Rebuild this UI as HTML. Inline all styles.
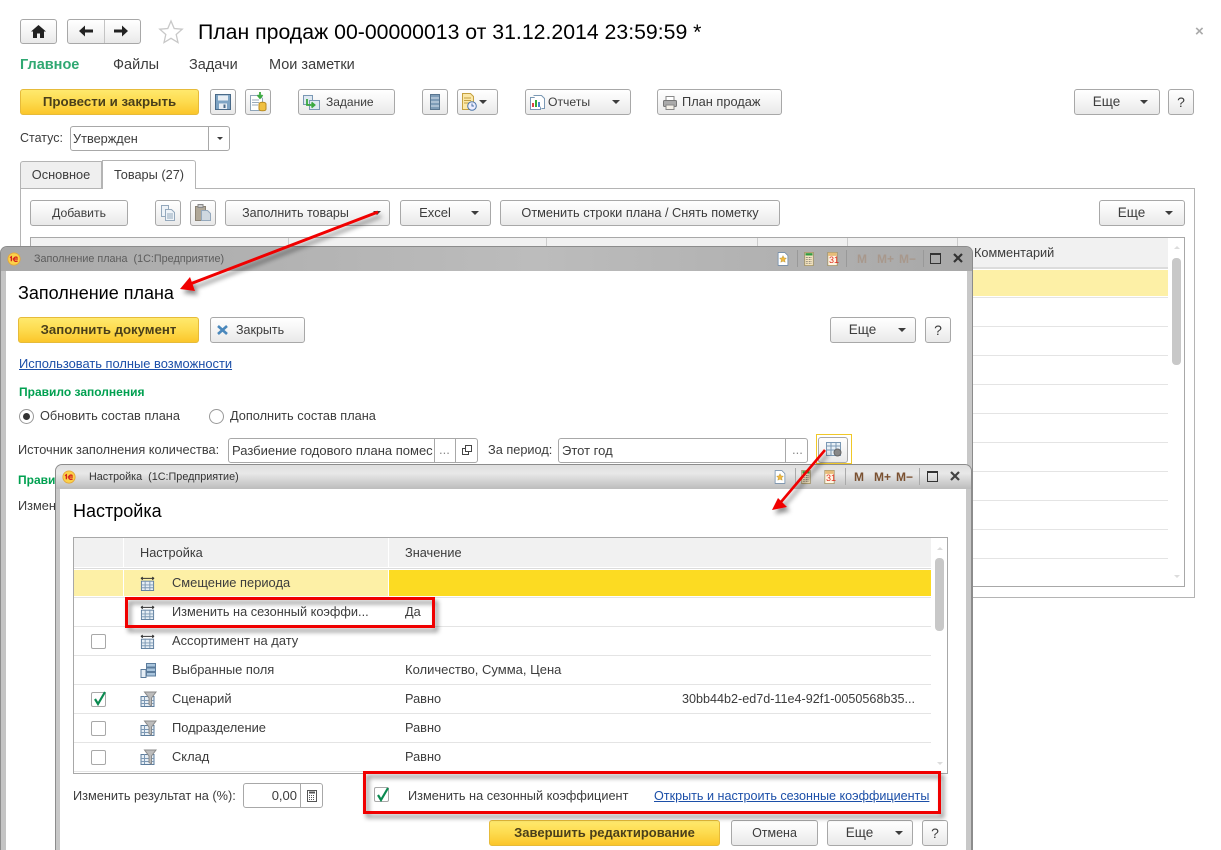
<!DOCTYPE html>
<html><head><meta charset="utf-8"><style>
*{box-sizing:border-box}
html,body{margin:0;padding:0;background:#fff;overflow:hidden}
body{width:1221px;height:850px;position:relative;font-family:"Liberation Sans",sans-serif;font-size:12.75px;color:#3c3c3c}
.a{position:absolute}
.t{position:absolute;white-space:nowrap;height:16px;line-height:16px}
.b{position:absolute;border:1px solid #a8a8a8;border-radius:3px;background:linear-gradient(#fff,#f5f5f5 50%,#e9e9e9);text-align:center;white-space:nowrap;height:26px;line-height:24px}
.y{border-color:#e6bb3a;background:linear-gradient(#ffe96d,#fddb4e 50%,#fbc62a);font-weight:bold;color:#4a3f1a}
.f{position:absolute;border:1px solid #a8a8a8;border-radius:3px;background:#fff;height:25px;line-height:23px;padding-left:3px;white-space:nowrap;overflow:hidden}
.d{position:absolute;top:0;bottom:0;width:1px;background:#a8a8a8}
.c{position:absolute;width:0;height:0;border-left:4px solid transparent;border-right:4px solid transparent;border-top:4px solid #3c3c3c}
.l{position:absolute;height:1px;background:#e4e4e4}
.cb{position:absolute;width:15px;height:15px;border:1px solid #a8a8a8;border-radius:2px;background:#fff}
.su{position:absolute;width:0;height:0;border-left:3px solid transparent;border-right:3px solid transparent;border-bottom:3px solid #dcdcdc}
.sd{position:absolute;width:0;height:0;border-left:3px solid transparent;border-right:3px solid transparent;border-top:3px solid #dcdcdc}
a{color:#1c4fa8;text-decoration:underline;position:absolute;white-space:nowrap;height:16px;line-height:16px}
svg{position:absolute;overflow:visible}
.g{color:#00a050;font-weight:bold}
</style></head><body>

<svg width="0" height="0" style="position:absolute"><defs>
<symbol id="ig" viewBox="0 0 16 16" overflow="visible"><path d="M1 2.5h14M1 2.5l2-1.500M1 2.500l2 1.500M15 2.500l-2-1.500M15 2.500l-2 1.500" stroke="#333" fill="none" stroke-width="1"/><rect x="1.500" y="5.500" width="13" height="10" fill="#e6eef5" stroke="#5c7c9c"/><path d="M5.500 5v10M10.500 5v10M1.500 9.500h13M1.500 12.500h13" stroke="#7c98b4"/></symbol>
<symbol id="il" viewBox="0 0 16 16" overflow="visible"><rect x="1" y="7.500" width="5" height="8" fill="#e6eef5" stroke="#5c7c9c"/><rect x="6.500" y="1.500" width="9" height="3.500" fill="#a8c4dc" stroke="#5c7c9c"/><rect x="6.500" y="6" width="9" height="3.500" fill="#a8c4dc" stroke="#5c7c9c"/><rect x="6.500" y="10.500" width="9" height="3.500" fill="#a8c4dc" stroke="#5c7c9c"/></symbol>
<symbol id="ifn" viewBox="0 0 16 16" overflow="visible"><rect x="1" y="5.500" width="13" height="10" fill="#e6eef5" stroke="#5c7c9c"/><path d="M4.500 5v10M1 9.500h13M1 12.500h13" stroke="#7c98b4"/><path d="M4.500 1h11.500l-4.500 6v8l-2.500-1.500V7z" fill="#bcbcbc" stroke="#8a8a8a"/></symbol>
<symbol id="i1c" viewBox="0 0 16 16"><circle cx="8" cy="8" r="7" fill="#fbd24a" stroke="#e4a63a"/><path d="M3.500 6.500l1.500-1v5M12 6.500a2.500 2.500 0 1 0 0 3.500M6.500 8h6" fill="none" stroke="#d4201c" stroke-width="1.500"/></symbol>
<symbol id="istar" viewBox="0 0 16 18"><path d="M1.500.5h9l4 4v13h-13z" fill="#fff" stroke="#6a88a8"/><path d="M8 4.500l1.400 3 3.200.4-2.300 2.200.6 3.200L8 11.800l-2.900 1.500.6-3.200-2.300-2.200 3.200-.4z" fill="#f0b840" stroke="#a88a30" stroke-width=".5"/></symbol>
<symbol id="icalc" viewBox="0 0 12 18"><rect x=".5" y=".5" width="11" height="17" fill="#f4e4c0" stroke="#a09060"/><rect x="1.500" y="1.500" width="9" height="3" fill="#2f9a40"/><path d="M2 7h8M2 9.500h8M2 12h8M2 14.500h8" stroke="#555" stroke-dasharray="1 1"/></symbol>
<symbol id="ical" viewBox="0 0 13 18"><rect x=".5" y=".5" width="12" height="17" fill="#fff6e4" stroke="#a09060"/><rect x="1" y="1" width="11" height="4" fill="#e8bc78"/></symbol>
<filter id="sh" x="-20%" y="-20%" width="140%" height="140%"><feDropShadow dx="3" dy="4" stdDeviation="2.500" flood-color="#000" flood-opacity=".45"/></filter>
</defs></svg>

<!-- main form -->
<div class="b" style="left:20px;top:19px;width:37px;height:25px"></div>
<svg style="left:31px;top:25px" width="15" height="13" viewBox="0 0 15 13"><path d="M7.500 0L0 6.500h2V13h4V8.500h3V13h4V6.500h2z" fill="#222"/></svg>
<div class="b" style="left:67px;top:19px;width:74px;height:25px"><div class="d" style="left:36px;background:#c4c4c4"></div></div>
<svg style="left:79px;top:25px" width="14" height="12" viewBox="0 0 14 12"><path d="M0 6l6-5.500V4.500h8v3H6v4z" fill="#222"/></svg>
<svg style="left:114px;top:25px" width="14" height="12" viewBox="0 0 14 12"><path d="M14 6L8 .5V4.500H0v3h8v4z" fill="#222"/></svg>
<svg style="left:159px;top:20px" width="24" height="24" viewBox="0 0 24 24"><path d="M12 1l3.200 7.500 8 .7-6 5.300 1.800 8L12 18.300 5 22.500l1.800-8-6-5.300 8-.7z" fill="#fff" stroke="#c8c8c8" stroke-width="1.300"/></svg>
<div class="t" style="left:198px;top:20px;height:24px;line-height:24px;font-size:21.25px;color:#000">План продаж 00-00000013 от 31.12.2014 23:59:59 *</div>
<div class="t" style="left:1195px;top:24px;font-size:15px;color:#aaa;font-weight:bold">×</div>

<div class="t g" style="left:20px;top:57px;font-size:14.5px;color:#2fa872">Главное</div>
<div class="t" style="left:113px;top:57px;font-size:14.5px">Файлы</div>
<div class="t" style="left:189px;top:57px;font-size:14.5px">Задачи</div>
<div class="t" style="left:269px;top:57px;font-size:14.5px">Мои заметки</div>

<div class="b y" style="left:20px;top:89px;width:179px;font-size:13.3px">Провести и закрыть</div>
<div class="b" style="left:210px;top:89px;width:26px"></div>
<svg style="left:215px;top:94px" width="16" height="16" viewBox="0 0 16 16"><path d="M.5.500h15v15H.5z" fill="#7ea4c4" stroke="#4a6a88"/><rect x="3" y="1.500" width="10" height="5" fill="#e8eef4"/><rect x="4" y="9.500" width="8" height="5.500" fill="#e8eef4"/><rect x="8.500" y="10.500" width="2" height="3.500" fill="#4a6a88"/></svg>
<div class="b" style="left:245px;top:89px;width:26px"></div>
<svg style="left:249px;top:92px" width="18" height="20" viewBox="0 0 18 20"><path d="M1.500 3.500h9l3 3v12h-12z" fill="#fff" stroke="#8ea4b8"/><path d="M3 8h7M3 10.500h7M3 13h6" stroke="#9ab"/><path d="M11 0v5M8.500 3l2.500 3 2.500-3" fill="none" stroke="#3aa840" stroke-width="1.800"/><ellipse cx="13.500" cy="12" rx="3.500" ry="1.800" fill="#f0c040" stroke="#b88a20"/><path d="M10 12v5c0 2.400 7 2.400 7 0v-5" fill="#f0c040" stroke="#b88a20"/></svg>
<div class="b" style="left:298px;top:89px;width:97px;text-align:left;padding-left:27px;font-size:12px">Задание</div>
<svg style="left:303px;top:95px" width="17" height="15" viewBox="0 0 17 15"><rect x=".5" y=".5" width="9" height="9" fill="#dfe9f2" stroke="#7a98b4"/><rect x="6.500" y="5.500" width="10" height="9" fill="#dfe9f2" stroke="#7a98b4"/><path d="M4 4v6h7M8.500 7.500l3 2.500-3 2.500" fill="none" stroke="#3aa840" stroke-width="1.800"/></svg>
<div class="b" style="left:422px;top:89px;width:26px"></div>
<svg style="left:430px;top:94px" width="10" height="16" viewBox="0 0 10 16"><path d="M.5.500h9v15h-9z" fill="#7f9db8" stroke="#5a7690"/><path d="M1 4h8M1 8h8M1 12h8" stroke="#d8e4ee"/></svg>
<div class="b" style="left:457px;top:89px;width:41px"></div>
<svg style="left:462px;top:93px" width="15" height="18" viewBox="0 0 15 18"><path d="M.5.500h8l3 3v13H.5z" fill="#fbe8a8" stroke="#c4a040"/><path d="M2 5h7M2 7.500h7M2 10h5" stroke="#c4a040"/><circle cx="10" cy="13" r="4.300" fill="#eef" stroke="#4a74a8"/><path d="M10 10.500V13h2" stroke="#4a74a8" fill="none"/></svg>
<div class="c" style="left:479px;top:100px"></div>
<div class="b" style="left:525px;top:89px;width:106px;text-align:left;padding-left:22px;font-size:12.2px">Отчеты<div class="c" style="left:86px;top:10px"></div></div>
<svg style="left:530px;top:95px" width="15" height="15" viewBox="0 0 15 15"><path d="M.5 2.500h10v12H.5z" fill="#fff" stroke="#7a98b4"/><path d="M3.500.5h8l3 3v10h-3" fill="#fff" stroke="#7a98b4"/><path d="M3 12V8" stroke="#d44" stroke-width="2"/><path d="M6 12V5" stroke="#3a3" stroke-width="2"/><path d="M9 12V7" stroke="#48c" stroke-width="2"/></svg>
<div class="b" style="left:657px;top:89px;width:125px;text-align:left;padding-left:24px;font-size:12.8px">План продаж</div>
<svg style="left:663px;top:96px" width="14" height="14" viewBox="0 0 14 14"><rect x="3" y=".5" width="8" height="4" fill="#fff" stroke="#888"/><rect x=".5" y="4.500" width="13" height="6" rx="1" fill="#aaa" stroke="#777"/><rect x="3" y="9" width="8" height="4.500" fill="#f4f0e8" stroke="#888"/></svg>
<div class="b" style="left:1074px;top:89px;width:86px;padding-right:21px;font-size:13.5px">Еще<div class="c" style="left:65px;top:10px"></div></div>
<div class="b" style="left:1168px;top:89px;width:26px;font-size:14px">?</div>

<div class="t" style="left:20px;top:130px;font-size:12.5px">Статус:</div>
<div class="f" style="left:70px;top:126px;width:160px;padding-left:2px">Утвержден<div class="d" style="left:137px"></div><div class="c" style="left:146px;top:10px;border-width:3px 3px 0"></div></div>

<div class="a" style="left:20px;top:161px;width:82px;height:28px;background:#efefef;border:1px solid #b4b4b4;border-radius:3px 0 0 0;text-align:center;line-height:26px">Основное</div>
<div class="a" style="left:20px;top:188px;width:1175px;height:410px;border:1px solid #b4b4b4"></div>
<div class="a" style="left:102px;top:160px;width:94px;height:29px;background:#fff;border:1px solid #b4b4b4;border-bottom:0;border-radius:0 3px 0 0;text-align:center;line-height:27px">Товары (27)</div>

<div class="b" style="left:30px;top:200px;width:98px;font-size:12.2px">Добавить</div>
<div class="b" style="left:155px;top:200px;width:26px"></div>
<svg style="left:161px;top:205px" width="14" height="16" viewBox="0 0 14 16"><path d="M.5.500h7v11h-7z" fill="#eef3f8" stroke="#94a8bc"/><path d="M4.500 4.500h6l3 3v8h-9z" fill="#eef3f8" stroke="#94a8bc"/><path d="M6 9h6M6 11h6M6 13h6" stroke="#94a8bc"/></svg>
<div class="b" style="left:190px;top:200px;width:26px"></div>
<svg style="left:195px;top:204px" width="16" height="17" viewBox="0 0 16 17"><rect x=".5" y="2.500" width="10" height="14" fill="#b0a898" stroke="#8a8274"/><rect x="3" y=".5" width="5" height="3" fill="#ccc" stroke="#888"/><path d="M6.500 6.500h6l3 3v7h-9z" fill="#cfd8e0" stroke="#94a8bc"/></svg>
<div class="b" style="left:225px;top:200px;width:165px;padding-right:24px;font-size:12.5px">Заполнить товары<div class="c" style="left:147px;top:10px"></div></div>
<div class="b" style="left:400px;top:200px;width:91px;padding-right:21px;font-size:13px">Excel<div class="c" style="left:70px;top:10px"></div></div>
<div class="b" style="left:500px;top:200px;width:280px">Отменить строки плана / Снять пометку</div>
<div class="b" style="left:1099px;top:200px;width:86px;padding-right:21px;font-size:13.5px">Еще<div class="c" style="left:65px;top:10px"></div></div>

<!-- grid behind -->
<div class="a" style="left:30px;top:237px;width:1155px;height:350px;border:1px solid #a8a8a8"></div>
<div class="a" style="left:31px;top:238px;width:1137px;height:29px;background:#f1f1f1"></div>
<div class="a" style="left:31px;top:267px;width:1137px;height:2px;background:#dcdcdc"></div>
<div class="a" style="left:288px;top:238px;width:1px;height:8px;background:#ccc"></div>
<div class="a" style="left:546px;top:238px;width:1px;height:8px;background:#ccc"></div>
<div class="a" style="left:757px;top:238px;width:1px;height:8px;background:#ccc"></div>
<div class="a" style="left:847px;top:238px;width:1px;height:8px;background:#ccc"></div>
<div class="a" style="left:957px;top:238px;width:1px;height:8px;background:#ccc"></div>
<div class="t" style="left:974px;top:245px">Комментарий</div>
<div class="a" style="left:960px;top:270px;width:208px;height:26px;background:#fdf0a6"></div>
<div class="l" style="left:960px;top:297px;width:208px"></div>
<div class="l" style="left:960px;top:326px;width:208px"></div>
<div class="l" style="left:960px;top:355px;width:208px"></div>
<div class="l" style="left:960px;top:384px;width:208px"></div>
<div class="l" style="left:960px;top:413px;width:208px"></div>
<div class="l" style="left:960px;top:442px;width:208px"></div>
<div class="l" style="left:960px;top:471px;width:208px"></div>
<div class="l" style="left:960px;top:500px;width:208px"></div>
<div class="l" style="left:960px;top:529px;width:208px"></div>
<div class="l" style="left:960px;top:558px;width:208px"></div>
<div class="a" style="left:1172px;top:258px;width:9px;height:107px;background:#c8c8c8;border-radius:4px"></div>
<div class="su" style="left:1174px;top:246px"></div>
<div class="sd" style="left:1174px;top:575px"></div>

<!-- window 1 -->
<div class="a" style="left:0;top:246px;width:973px;height:604px;background:linear-gradient(90deg,#c4c4c4,#c8c8c8);border:1px solid #8c8c8c;border-bottom:0;border-radius:7px 7px 0 0"></div>
<div class="a" style="left:1px;top:247px;width:971px;height:24px;background:linear-gradient(90deg,#a8a8a8,#bcbcbc 55%,#a8a8a8);border-radius:6px 6px 0 0"></div>
<div class="a" style="left:6px;top:271px;width:961px;height:579px;background:#fff"></div>
<svg style="left:7px;top:252px" width="14" height="14"><use href="#i1c"/></svg>
<div class="t" style="left:34px;top:251px;font-size:10.8px;color:#5c5c5c">Заполнение плана&nbsp; (1С:Предприятие)</div>
<svg style="left:777px;top:252px" width="12" height="14"><use href="#istar"/></svg>
<div class="a" style="left:797px;top:250px;width:1px;height:17px;background:#999"></div>
<svg style="left:804px;top:252px" width="10" height="14"><use href="#icalc"/></svg>
<svg style="left:827px;top:252px" width="11" height="14"><use href="#ical"/></svg>
<div class="t" style="left:829px;top:255px;font-size:9px;color:#e03020;line-height:10px;height:10px">31</div>
<div class="a" style="left:846px;top:250px;width:1px;height:17px;background:#999"></div>
<div class="t" style="left:857px;top:251px;font-weight:bold;font-size:12px;color:#a8988c">M</div>
<div class="t" style="left:877px;top:251px;font-weight:bold;font-size:12px;color:#a8988c">M+</div>
<div class="t" style="left:899px;top:251px;font-weight:bold;font-size:12px;color:#a8988c">M−</div>
<div class="a" style="left:923px;top:250px;width:1px;height:17px;background:#999"></div>
<div class="a" style="left:930px;top:253px;width:11px;height:11px;border:1.500px solid #333;border-top-width:2px"></div>
<svg style="left:953px;top:253px" width="10" height="10" viewBox="0 0 10 10"><path d="M1 1l8 8M9 1L1 9" stroke="#333" stroke-width="2.200"/></svg>

<div class="t" style="left:18px;top:283px;height:20px;line-height:20px;font-size:18px;color:#000">Заполнение плана</div>
<div class="b y" style="left:18px;top:317px;width:181px;font-size:13.2px">Заполнить документ</div>
<div class="b" style="left:210px;top:317px;width:95px;text-align:left;padding-left:25px;font-size:12.5px">Закрыть</div>
<svg style="left:217px;top:325px" width="11" height="10" viewBox="0 0 11 10"><path d="M1 1l9 8M10 1L1 9" stroke="#4a88bc" stroke-width="2.600"/></svg>
<div class="b" style="left:830px;top:317px;width:86px;padding-right:21px;font-size:13.5px">Еще<div class="c" style="left:67px;top:10px"></div></div>
<div class="b" style="left:925px;top:317px;width:26px;font-size:14px">?</div>
<a style="left:19px;top:356px;font-size:12.9px">Использовать полные возможности</a>
<div class="t g" style="left:19px;top:384px;font-size:12px">Правило заполнения</div>
<div class="a" style="left:19px;top:409px;width:15px;height:15px;border:1px solid #999;border-radius:50%;background:#fff"></div>
<div class="a" style="left:23px;top:413px;width:7px;height:7px;border-radius:50%;background:#333"></div>
<div class="t" style="left:40px;top:408px">Обновить состав плана</div>
<div class="a" style="left:209px;top:409px;width:15px;height:15px;border:1px solid #999;border-radius:50%;background:#fff"></div>
<div class="t" style="left:230px;top:408px">Дополнить состав плана</div>
<div class="t" style="left:18px;top:442px">Источник заполнения количества:</div>
<div class="f" style="left:228px;top:438px;width:250px;font-size:13px">Разбиение годового плана помес<div class="d" style="left:205px"></div><div class="d" style="left:226px"></div><div class="t" style="left:210px;top:3px;color:#888">...</div></div>
<svg style="left:462px;top:445px" width="10" height="10" viewBox="0 0 10 10"><path d="M3.500.5h6v6h-6zM3 3.500H.5v6h6V7" fill="none" stroke="#444"/></svg>
<div class="t" style="left:488px;top:442px">За период:</div>
<div class="f" style="left:558px;top:438px;width:250px;font-size:13px">Этот год<div class="d" style="left:226px"></div><div class="t" style="left:233px;top:3px;color:#888">...</div></div>
<div class="a" style="left:816px;top:434px;width:36px;height:30px;border:1px solid #f0c828"></div>
<div class="b" style="left:818px;top:437px;width:30px;height:26px"></div>
<svg style="left:826px;top:442px" width="16" height="15" viewBox="0 0 16 15"><rect x=".5" y=".5" width="14" height="13" fill="#e8f0f6" stroke="#7a98b4"/><path d="M5 .5v13M10 .5v13M.5 4h14M.5 8h14" stroke="#7a98b4"/><circle cx="11.500" cy="10.500" r="3.500" fill="#888" stroke="#666"/></svg>
<div class="t g" style="left:18px;top:472px;font-size:12px">Правило</div>
<div class="t" style="left:18px;top:498px">Изменить</div>

<!-- window 2 -->
<div class="a" style="left:55px;top:464px;width:917px;height:386px;background:#c8c8c8;border:1px solid #8c8c8c;border-bottom:0;border-radius:7px 7px 0 0"></div>
<div class="a" style="left:56px;top:465px;width:915px;height:24px;background:linear-gradient(#dedede,#e8e8e8 35%,#bcbcbc);border-radius:6px 6px 0 0"></div>
<div class="a" style="left:60px;top:489px;width:906px;height:361px;background:#fff"></div>
<svg style="left:62px;top:470px" width="14" height="14"><use href="#i1c"/></svg>
<div class="t" style="left:89px;top:469px;font-size:10.8px;color:#333">Настройка&nbsp; (1С:Предприятие)</div>
<svg style="left:774px;top:470px" width="12" height="14"><use href="#istar"/></svg>
<div class="a" style="left:795px;top:468px;width:1px;height:17px;background:#aaa"></div>
<svg style="left:801px;top:470px" width="10" height="14"><use href="#icalc"/></svg>
<svg style="left:824px;top:470px" width="11" height="14"><use href="#ical"/></svg>
<div class="t" style="left:826px;top:473px;font-size:9px;color:#e03020;line-height:10px;height:10px">31</div>
<div class="a" style="left:845px;top:468px;width:1px;height:17px;background:#aaa"></div>
<div class="t" style="left:854px;top:469px;font-weight:bold;font-size:12px;color:#7a5030">M</div>
<div class="t" style="left:874px;top:469px;font-weight:bold;font-size:12px;color:#7a5030">M+</div>
<div class="t" style="left:896px;top:469px;font-weight:bold;font-size:12px;color:#7a5030">M−</div>
<div class="a" style="left:919px;top:468px;width:1px;height:17px;background:#aaa"></div>
<div class="a" style="left:927px;top:471px;width:11px;height:11px;border:1.500px solid #333;border-top-width:2px"></div>
<svg style="left:950px;top:471px" width="10" height="10" viewBox="0 0 10 10"><path d="M1 1l8 8M9 1L1 9" stroke="#444" stroke-width="2.200"/></svg>

<div class="t" style="left:73px;top:501px;height:20px;line-height:20px;font-size:18px;color:#000">Настройка</div>

<div class="a" style="left:73px;top:537px;width:875px;height:237px;border:1px solid #a8a8a8"></div>
<div class="a" style="left:74px;top:538px;width:857px;height:29px;background:#f1f1f1"></div>
<div class="a" style="left:74px;top:568px;width:857px;height:1px;background:#dcdcdc"></div>
<div class="a" style="left:123px;top:538px;width:1px;height:29px;background:#fff"></div>
<div class="a" style="left:388px;top:538px;width:1px;height:29px;background:#fff"></div>
<div class="t" style="left:140px;top:545px">Настройка</div>
<div class="t" style="left:405px;top:545px">Значение</div>
<div class="a" style="left:74px;top:570px;width:49px;height:26px;background:#fdf0a6"></div>
<div class="a" style="left:124px;top:570px;width:264px;height:26px;background:#fdf0a6"></div>
<div class="a" style="left:389px;top:570px;width:542px;height:26px;background:#fcdb22"></div>
<div class="l" style="left:74px;top:597px;width:857px"></div>
<div class="l" style="left:74px;top:626px;width:857px"></div>
<div class="l" style="left:74px;top:655px;width:857px"></div>
<div class="l" style="left:74px;top:684px;width:857px"></div>
<div class="l" style="left:74px;top:713px;width:857px"></div>
<div class="l" style="left:74px;top:742px;width:857px"></div>
<div class="l" style="left:74px;top:771px;width:857px"></div>
<div class="a" style="left:935px;top:558px;width:9px;height:73px;background:#c8c8c8;border-radius:4px"></div>
<div class="su" style="left:937px;top:547px"></div>
<div class="sd" style="left:937px;top:762px"></div>

<svg style="left:140px;top:576px" width="15" height="15"><use href="#ig"/></svg>
<svg style="left:140px;top:605px" width="15" height="15"><use href="#ig"/></svg>
<svg style="left:140px;top:634px" width="15" height="15"><use href="#ig"/></svg>
<svg style="left:140px;top:662px" width="16" height="16"><use href="#il"/></svg>
<svg style="left:140px;top:691px" width="16" height="16"><use href="#ifn"/></svg>
<svg style="left:140px;top:720px" width="16" height="16"><use href="#ifn"/></svg>
<svg style="left:140px;top:749px" width="16" height="16"><use href="#ifn"/></svg>

<div class="t" style="left:172px;top:575px;font-size:12.9px">Смещение периода</div>
<div class="t" style="left:172px;top:604px">Изменить на сезонный коэффи...</div>
<div class="t" style="left:172px;top:633px;font-size:12.9px">Ассортимент на дату</div>
<div class="t" style="left:172px;top:662px;font-size:12.9px">Выбранные поля</div>
<div class="t" style="left:172px;top:691px;font-size:12.9px">Сценарий</div>
<div class="t" style="left:172px;top:720px;font-size:12.9px">Подразделение</div>
<div class="t" style="left:172px;top:749px;font-size:12.9px">Склад</div>
<div class="t" style="left:405px;top:604px">Да</div>
<div class="t" style="left:405px;top:662px;font-size:13px">Количество, Сумма, Цена</div>
<div class="t" style="left:405px;top:691px">Равно</div>
<div class="t" style="left:405px;top:720px">Равно</div>
<div class="t" style="left:405px;top:749px">Равно</div>
<div class="t" style="left:682px;top:691px;font-size:12.6px">30bb44b2-ed7d-11e4-92f1-0050568b35...</div>

<div class="cb" style="left:91px;top:634px"></div>
<div class="cb" style="left:91px;top:692px"></div>
<svg style="left:92px;top:690px" width="16" height="16" viewBox="0 0 16 16"><path d="M3 9l3 5 7-12" fill="none" stroke="#0a8a50" stroke-width="2.200"/></svg>
<div class="cb" style="left:91px;top:721px"></div>
<div class="cb" style="left:91px;top:750px"></div>

<div class="t" style="left:73px;top:788px">Изменить результат на (%):</div>
<div class="f" style="left:243px;top:783px;width:80px;text-align:right;padding-right:25px;font-size:13px">0,00<div class="d" style="left:56px"></div></div>
<svg style="left:307px;top:790px" width="11" height="12" viewBox="0 0 11 12"><rect x=".5" y=".5" width="9" height="11" fill="#fff" stroke="#555"/><path d="M2 2.500h6" stroke="#555" stroke-width="2"/><path d="M2 5.500h6M2 7.500h6M2 9.500h6" stroke="#555" stroke-dasharray="1 1"/></svg>
<div class="cb" style="left:374px;top:787px"></div>
<svg style="left:375px;top:786px" width="16" height="16" viewBox="0 0 16 16"><path d="M3 9l3 5 7-12" fill="none" stroke="#0a8a50" stroke-width="2.200"/></svg>
<div class="t" style="left:408px;top:788px">Изменить на сезонный коэффициент</div>
<a style="left:654px;top:788px;font-size:12.6px">Открыть и настроить сезонные коэффициенты</a>

<div class="b y" style="left:489px;top:820px;width:231px;font-size:13px">Завершить редактирование</div>
<div class="b" style="left:731px;top:820px;width:87px;font-size:12.5px">Отмена</div>
<div class="b" style="left:827px;top:820px;width:86px;padding-right:21px;font-size:13.5px">Еще<div class="c" style="left:67px;top:10px"></div></div>
<div class="b" style="left:922px;top:820px;width:26px;font-size:14px">?</div>

<!-- annotations -->
<svg style="left:0;top:0" width="1221" height="850" viewBox="0 0 1221 850">
<g filter="url(#sh)">
<path d="M378 212L190 284" stroke="#f00000" stroke-width="3" fill="none"/>
<path d="M180 289L190 277L195 291z" fill="#f00000"/>
<path d="M825 450L781 502" stroke="#f00000" stroke-width="2.600" fill="none"/>
<path d="M772 510L778 498L787 507z" fill="#f00000"/>
<rect x="126.500" y="598.500" width="307" height="28" fill="none" stroke="#f00000" stroke-width="3"/>
<rect x="364.500" y="772.500" width="575" height="40" fill="none" stroke="#f00000" stroke-width="3"/>
</g>
</svg>
</body></html>
